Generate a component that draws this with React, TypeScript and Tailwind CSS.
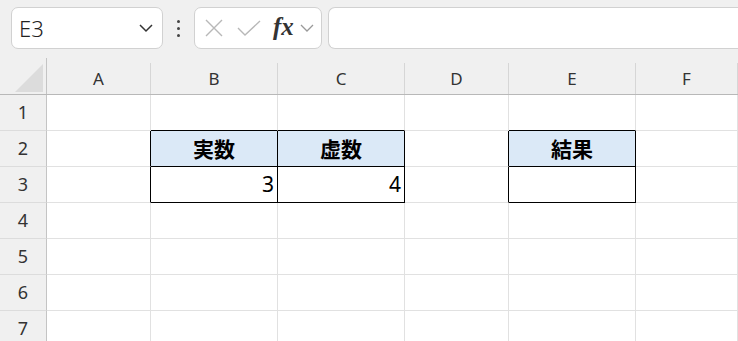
import React from "react"

const cols = ["A", "B", "C", "D", "E", "F"]
const rows = [1, 2, 3, 4, 5, 6, 7]

type Cell = { text?: string; head?: boolean; num?: boolean }

// cells inside the bordered boxes
const data: Record<string, Cell> = {
  B2: { text: "実数", head: true },
  C2: { text: "虚数", head: true },
  E2: { text: "結果", head: true },
  B3: { text: "3", num: true },
  C3: { text: "4", num: true },
  E3: {},
}

const boxed = (c: number, r: number) => {
  if (c < 0 || c >= cols.length) return false
  return `${cols[c]}${r}` in data
}

function GridCell({ c, r }: { c: number; r: number }) {
  const key = `${cols[c]}${r}`
  const cell = data[key]
  const rightBlack = boxed(c, r) || boxed(c + 1, r)
  const bottomBlack = boxed(c, r) || boxed(c, r + 1)
  return (
    <div
      className={`h-[36px] border-r border-b flex items-center ${
        rightBlack ? "border-r-black" : "border-r-[#e1e1e1]"
      } ${bottomBlack ? "border-b-black" : "border-b-[#e1e1e1]"} ${
        cell?.head ? "bg-[#dbe9f7] justify-center" : "bg-white"
      } ${cell?.num ? "justify-end pr-[3px]" : ""}`}
    >
      {cell?.head && (
        <span className="text-[21px] font-bold text-black [font-family:'Noto_Sans_CJK_JP',sans-serif]">
          {cell.text}
        </span>
      )}
      {cell?.num && (
        <span className="text-[21px] text-black [font-family:'Noto_Sans','Liberation_Sans',sans-serif]">
          {cell.text}
        </span>
      )}
    </div>
  )
}

function Toolbar() {
  return (
    <div className="h-[58px] bg-[#f0f0f0] flex items-start pt-[7px] pl-[11px]">
      {/* Name box */}
      <div className="w-[152px] h-[42px] bg-white border border-[#d1d1d1] rounded-[7px] flex items-center pl-[7px] pr-[6px] justify-between">
        <span className="text-[22px] font-light text-[#222] [font-family:'Noto_Sans','Liberation_Sans',sans-serif]">E3</span>
        <svg width="16" height="10" viewBox="0 0 16 10" className="mr-[2px]">
          <path d="M2 2 L8 8 L14 2" fill="none" stroke="#333" strokeWidth="1.5" />
        </svg>
      </div>

      {/* dots */}
      <div className="w-[31px] h-[42px] flex flex-col items-center justify-center gap-[4px]">
        <span className="w-[3px] h-[3px] bg-[#444] rounded-full" />
        <span className="w-[3px] h-[3px] bg-[#444] rounded-full" />
        <span className="w-[3px] h-[3px] bg-[#444] rounded-full" />
      </div>

      {/* formula buttons */}
      <div className="w-[128px] h-[42px] bg-white border border-[#d1d1d1] rounded-[7px] flex items-center pl-[9px]">
        <svg width="20" height="20" viewBox="0 0 20 20">
          <path d="M2 2 L18 18 M18 2 L2 18" stroke="#b8b8b8" strokeWidth="1.4" fill="none" />
        </svg>
        <svg width="24" height="18" viewBox="0 0 24 18" className="ml-[13px]">
          <path d="M1 9 L8 16 L23 2" stroke="#b8b8b8" strokeWidth="1.4" fill="none" />
        </svg>
        <span className="ml-[12px] text-[25px] leading-none italic font-bold text-[#333] [font-family:'Liberation_Serif',serif] -mt-[4px]">
          fx
        </span>
        <svg width="16" height="10" viewBox="0 0 16 10" className="ml-[5px]">
          <path d="M2 2 L8 8 L14 2" fill="none" stroke="#999" strokeWidth="1.3" />
        </svg>
      </div>

      {/* formula input */}
      <div className="flex-1 ml-[6px] h-[42px] bg-white border border-r-0 border-[#d1d1d1] rounded-l-[7px]" />
    </div>
  )
}

export default function App() {
  const template = "grid grid-cols-[47px_104px_127px_127px_104px_127px_1fr]"
  return (
    <div className="w-[738px] h-[341px] overflow-hidden bg-white [font-family:'Noto_Sans','Liberation_Sans',sans-serif]">
      <Toolbar />

      {/* column headers */}
      <div className={`${template} h-[37px] bg-[#f0f0f0] border-b border-[#b8b8b8]`}>
        <div className="border-r border-[#c4c4c4] flex items-end justify-end pr-[3px] pb-[2px] pt-[5px]">
          <svg width="28" height="28" viewBox="0 0 28 28">
            <path d="M28 0 L28 28 L0 28 Z" fill="#dcdcdc" />
          </svg>
        </div>
        {cols.map((c) => (
          <div key={c} className="pt-[5px]">
            <div className="h-full border-r border-[#d6d6d6] flex items-center justify-center text-[17px] text-[#333]">
              {c}
            </div>
          </div>
        ))}
      </div>

      {/* rows */}
      {rows.map((r) => (
        <div key={r} className={template}>
          <div className="h-[36px] bg-[#f0f0f0] border-r border-r-[#c4c4c4] border-b border-b-[#dcdcdc] flex items-center justify-center text-[18px] text-[#333]">
            {r}
          </div>
          {cols.map((_, c) => (
            <GridCell key={c} c={c} r={r} />
          ))}
        </div>
      ))}
    </div>
  )
}
